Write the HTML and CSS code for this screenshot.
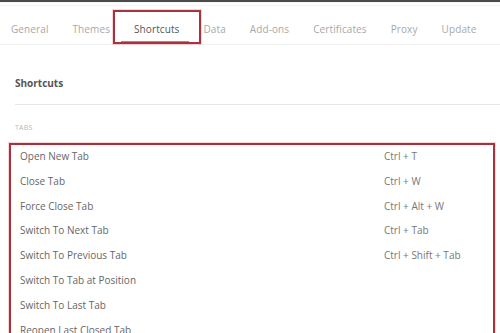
FILE: index.html
```html
<!DOCTYPE html>
<html>
<head>
<meta charset="utf-8">
<link rel="stylesheet" href="styles.css">
</head>
<body>
<div class="topline"></div>
<nav class="tabs">
  <span class="tab">General</span>
  <span class="tab">Themes</span>
  <span class="tab active">Shortcuts</span>
  <span class="tab">Data</span>
  <span class="tab">Add-ons</span>
  <span class="tab">Certificates</span>
  <span class="tab">Proxy</span>
  <span class="tab">Update</span>
  <div class="mark-tab"></div>
</nav>
<main class="content">
  <h2 class="title">Shortcuts</h2>
  <div class="divider"></div>
  <div class="section-label">TABS</div>
  <div class="list">
    <div class="row"><span>Open New Tab</span><span class="key">Ctrl + T</span></div>
    <div class="row"><span>Close Tab</span><span class="key">Ctrl + W</span></div>
    <div class="row"><span>Force Close Tab</span><span class="key">Ctrl + Alt + W</span></div>
    <div class="row"><span>Switch To Next Tab</span><span class="key">Ctrl + Tab</span></div>
    <div class="row"><span>Switch To Previous Tab</span><span class="key">Ctrl + Shift + Tab</span></div>
    <div class="row"><span>Switch To Tab at Position</span><span class="key"></span></div>
    <div class="row"><span>Switch To Last Tab</span><span class="key"></span></div>
    <div class="row"><span>Reopen Last Closed Tab</span><span class="key"></span></div>
  </div>
</main>
</body>
</html>
```

FILE: styles.css
```css
html, body {
  margin: 0;
  padding: 0;
  background: #fff;
  overflow: hidden;
  font-family: "Open Sans", "Noto Sans", sans-serif;
}
.topline {
  height: 2px;
  background: #4a4a4a;
  border-bottom: 1px solid #f7f7f7;
}
.tabs {
  position: relative;
  display: flex;
  align-items: flex-start;
  height: 38px;
  margin-left: -1px;
  margin-top: 2px;
  border-top: 1px solid #f3f3f3;
  border-bottom: 1px solid #efefef;
}
.tab {
  position: relative;
  padding: 16px 12px 0 12px;
  font-size: 10px;
  letter-spacing: 0.1px;
  color: #a8a8a8;
  line-height: 14px;
  white-space: nowrap;
}
.tab.active {
  color: #555;
}
.tab.active::after {
  content: "";
  position: absolute;
  left: -1px;
  right: 2px;
  bottom: -7px;
  height: 2px;
  background: #e0707a;
}
.mark-tab {
  position: absolute;
  left: 114px;
  top: 4px;
  width: 84px;
  height: 30px;
  border: 2px solid #a8323e;
  box-shadow: 0 0 0 1px rgba(235, 140, 150, 0.35);
}
.content {
  padding-left: 15px;
}
.title {
  margin: 31px 0 0 0;
  font-size: 10px;
  font-weight: 700;
  line-height: 14px;
  color: #555;
}
.divider {
  margin-top: 14px;
  height: 1px;
  background: #e6e6e6;
}
.section-label {
  margin-top: 18px;
  font-size: 7px;
  line-height: 10px;
  color: #b8b8b8;
  letter-spacing: 0.2px;
}
.list {
  margin: 10px 5px 0 -6px;
  border: 2px solid #a8323e;
  box-shadow: 0 0 0 1px rgba(235, 140, 150, 0.35);
}
.row {
  display: grid;
  grid-template-columns: 364px 1fr;
  height: 24.8px;
  line-height: 22px;
  padding-left: 9px;
  font-size: 10px;
  color: #666;
}
.key {
  color: #777;
}
```
